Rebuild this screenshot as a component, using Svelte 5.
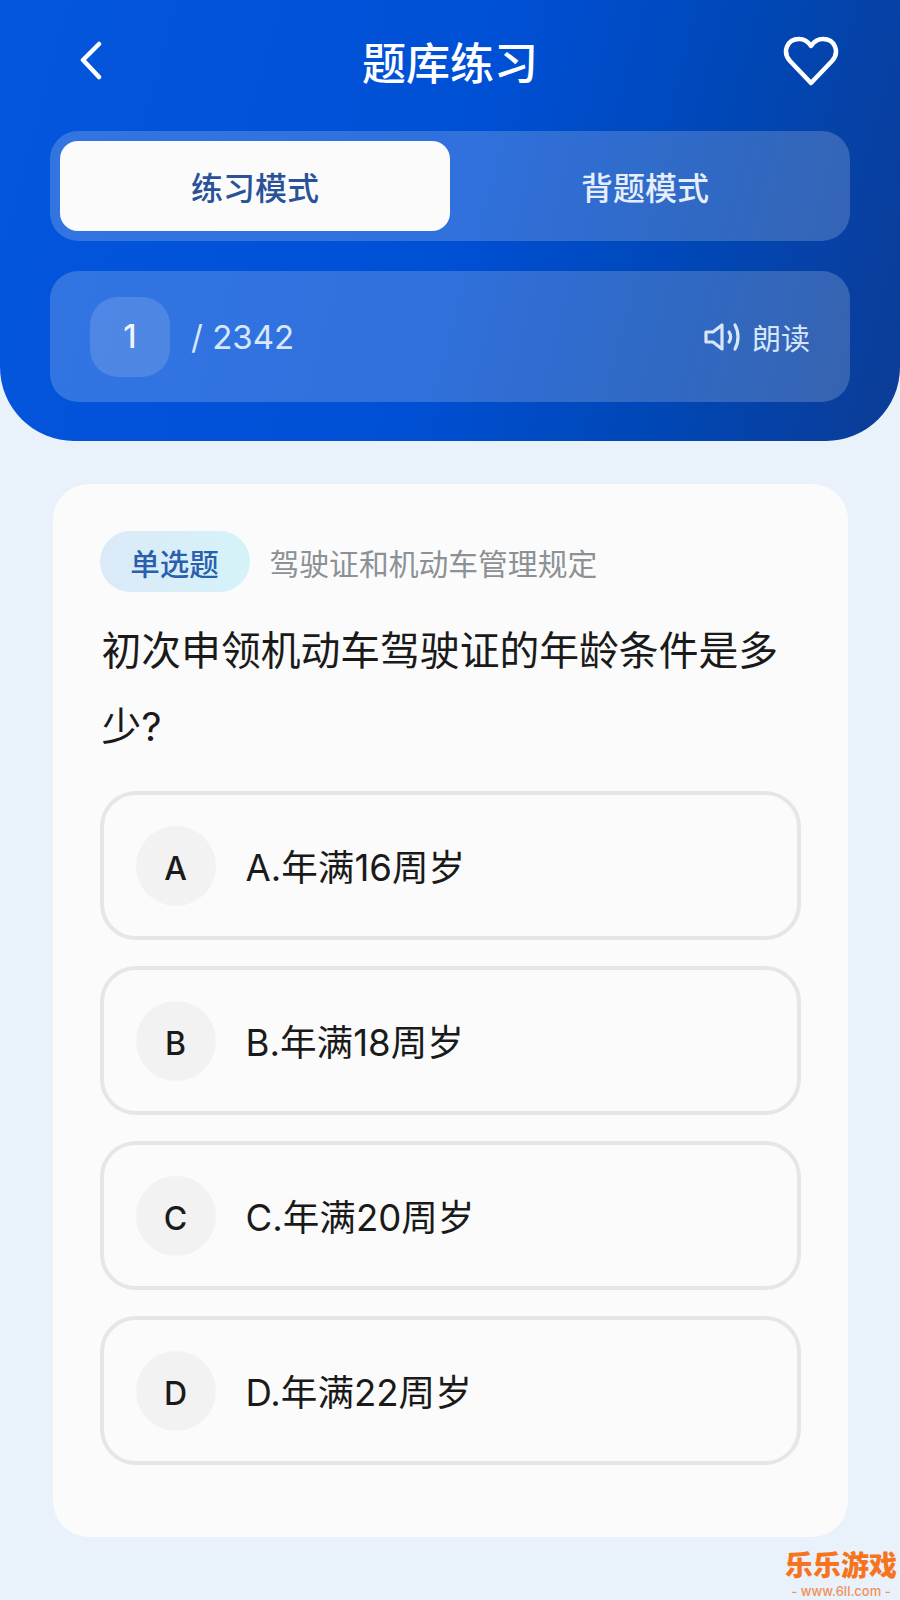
<script>
	const options = [
		{ key: 'A', text: 'A.年满16周岁' },
		{ key: 'B', text: 'B.年满18周岁' },
		{ key: 'C', text: 'C.年满20周岁' },
		{ key: 'D', text: 'D.年满22周岁' }
	];
	let mode = $state('practice');
</script>

<div class="page">
	<header class="header">
		<div class="nav">
			<button class="icon-btn back" aria-label="返回">
				<svg width="26" height="40" viewBox="0 0 26 40" fill="none">
					<path d="M21 3 L5 19 L21 36" stroke="#fff" stroke-width="4.5" stroke-linecap="round" stroke-linejoin="round" />
				</svg>
			</button>
			<h1>题库练习</h1>
			<button class="icon-btn heart" aria-label="收藏">
				<svg width="56" height="52" viewBox="0 0 56 52" fill="none">
					<path d="M28 48 L7 26 C-1 17 4 4 16 4 C21 4 25 6.5 28 11 C31 6.5 35 4 40 4 C52 4 57 17 49 26 Z" stroke="#fff" stroke-width="4.5" stroke-linejoin="round" />
				</svg>
			</button>
		</div>

		<div class="tabs">
			<button class="tab" class:active={mode === 'practice'} onclick={() => (mode = 'practice')}>练习模式</button>
			<button class="tab" class:active={mode === 'recite'} onclick={() => (mode = 'recite')}>背题模式</button>
		</div>

		<div class="progress">
			<span class="current">1</span>
			<span class="total">/ 2342</span>
			<span class="read">
				<svg width="38" height="30" viewBox="0 0 38 30" fill="none">
					<path d="M2 10 H9 L18 3 V27 L9 20 H2 Z" stroke="#d7e6fb" stroke-width="3.2" stroke-linejoin="round" />
					<path d="M25 10 C27 13 27 17 25 20" stroke="#d7e6fb" stroke-width="3.2" stroke-linecap="round" />
					<path d="M31 3 C35 10 35 20 31 27" stroke="#d7e6fb" stroke-width="3.2" stroke-linecap="round" />
				</svg>
				朗读
			</span>
		</div>
	</header>

	<main class="card">
		<div class="meta">
			<span class="pill">单选题</span>
			<span class="category">驾驶证和机动车管理规定</span>
		</div>
		<p class="question">初次申领机动车驾驶证的年龄条件是多少?</p>
		<div class="options">
			{#each options as opt (opt.key)}
				<div class="option">
					<span class="letter">{opt.key}</span>
					<span class="label">{opt.text}</span>
				</div>
			{/each}
		</div>
	</main>

	<div class="watermark">
		<span class="wm-name">乐乐游戏</span>
		<span class="wm-url">- www.6ll.com -</span>
	</div>
</div>

<style>
	:global(body) {
		margin: 0;
		background: #e9f1fb;
	}

	.page {
		position: relative;
		height: 1600px;
		overflow: hidden;
		background: #e9f1fb;
		font-family: Inter, 'Noto Sans CJK SC', sans-serif;
	}

	.header {
		box-sizing: border-box;
		height: 441px;
		padding: 0 50px;
		border-radius: 0 0 74px 74px;
		background: linear-gradient(105deg, #0456dc 0%, #0050d6 50%, #0047b6 75%, #0c3c96 100%);
	}

	.nav {
		height: 131px;
		display: grid;
		grid-template-columns: 1fr auto 1fr;
		align-items: center;
		padding-bottom: 10px;
		box-sizing: border-box;
	}

	.nav h1 {
		margin: 0;
		font-size: 44px;
		font-weight: 500;
		color: #fff;
	}

	.icon-btn {
		display: flex;
		padding: 0;
		border: none;
		background: none;
	}

	.back {
		margin-left: 28px;
		justify-self: start;
	}

	.heart {
		margin-right: 11px;
		justify-self: end;
	}

	.tabs {
		box-sizing: border-box;
		height: 110px;
		padding: 10px;
		display: flex;
		border-radius: 28px;
		background: rgba(255, 255, 255, 0.19);
	}

	.tab {
		flex: 1;
		border: none;
		border-radius: 18px;
		background: none;
		font-family: inherit;
		font-size: 32px;
		font-weight: 500;
		color: #e6eefb;
	}

	.tab.active {
		background: #fbfbfc;
		color: #2a5299;
	}

	.progress {
		box-sizing: border-box;
		height: 131px;
		margin-top: 30px;
		padding: 0 40px;
		display: flex;
		align-items: center;
		border-radius: 28px;
		background: rgba(255, 255, 255, 0.19);
	}

	.current {
		width: 80px;
		height: 80px;
		display: flex;
		align-items: center;
		justify-content: center;
		border-radius: 28px;
		background: rgba(255, 255, 255, 0.14);
		font-size: 32px;
		font-weight: 500;
		color: #f0f5fd;
	}

	.total {
		margin-left: 21px;
		font-size: 33px;
		font-weight: 400;
		color: #d7e6fb;
	}

	.read {
		margin-left: auto;
		display: flex;
		align-items: center;
		gap: 10px;
		font-size: 29px;
		color: #d7e6fb;
	}

	.card {
		box-sizing: border-box;
		width: 795px;
		height: 1053px;
		margin: 43px auto 0;
		padding: 47px 47px 0;
		border-radius: 36px;
		background: #fbfbfb;
	}

	.meta {
		display: flex;
		align-items: center;
		gap: 20px;
	}

	.pill {
		width: 150px;
		height: 61px;
		display: flex;
		align-items: center;
		justify-content: center;
		border-radius: 31px;
		background: linear-gradient(90deg, #dce9f8, #d4f3f9);
		font-size: 29.5px;
		font-weight: 500;
		color: #2a5fae;
	}

	.category {
		font-size: 29.8px;
		color: #8c9195;
	}

	.question {
		margin: 21px 0 0;
		padding-left: 2px;
		font-size: 39.8px;
		line-height: 76px;
		color: #1a1a1a;
	}

	.options {
		margin-top: 26px;
		display: flex;
		flex-direction: column;
		gap: 26px;
	}

	.option {
		box-sizing: border-box;
		height: 149px;
		padding: 0 32px;
		display: flex;
		align-items: center;
		gap: 30px;
		border: 4px solid #e6e6e6;
		border-radius: 36px;
	}

	.letter {
		box-sizing: border-box;
		width: 80px;
		height: 80px;
		padding-top: 5px;
		display: flex;
		align-items: center;
		justify-content: center;
		border-radius: 50%;
		background: #f2f2f2;
		font-size: 32px;
		font-weight: 500;
		color: #1a1a1a;
	}

	.label {
		font-size: 36.6px;
		color: #1a1a1a;
	}

	.watermark {
		position: absolute;
		right: 3px;
		bottom: 0;
		display: flex;
		flex-direction: column;
		align-items: center;
		color: #f7741f;
	}

	.wm-name {
		font-size: 28px;
		font-weight: 900;
		line-height: 32px;
	}

	.wm-url {
		font-size: 13px;
		font-weight: 500;
		line-height: 18px;
		color: #f0905a;
	}
</style>
